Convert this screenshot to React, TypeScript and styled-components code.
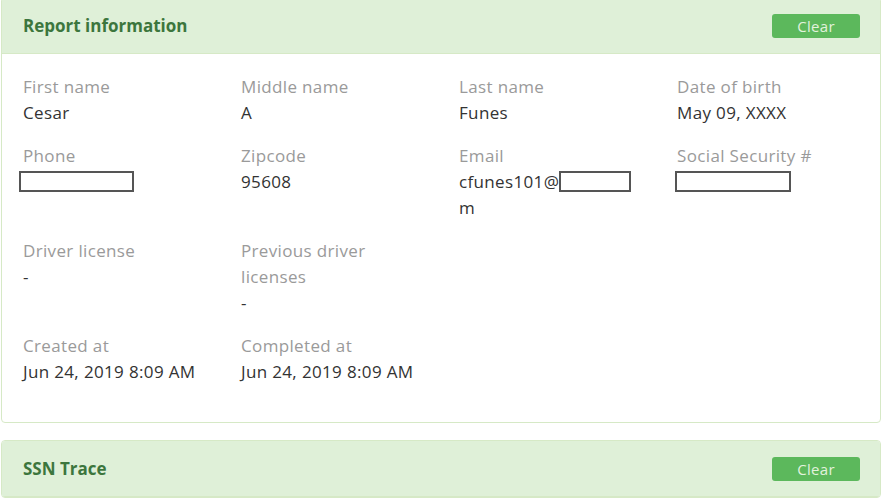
import styled, { createGlobalStyle } from 'styled-components';

const GlobalStyle = createGlobalStyle`
  body {
    margin: 0;
    background: #fff;
    font-family: "Open Sans", "Liberation Sans", sans-serif;
  }
`;

const fields = [
  [
    { label: 'First name', value: 'Cesar' },
    { label: 'Middle name', value: 'A' },
    { label: 'Last name', value: 'Funes' },
    { label: 'Date of birth', value: 'May 09, XXXX' },
  ],
];

const App = () => {
  return (
    <>
      <GlobalStyle />
      <SPage>
        <SPanel>
          <SHeading>
            <h3>Report information</h3>
            <SClear>Clear</SClear>
          </SHeading>
          <SBody>
            {fields[0].map((f) => (
              <SField key={f.label}>
                <SLabel>{f.label}</SLabel>
                <SValue>{f.value}</SValue>
              </SField>
            ))}
            <SField>
              <SLabel>Phone</SLabel>
              <SValue>
                <SRedact $w={115} $shift={-4} />
              </SValue>
            </SField>
            <SField>
              <SLabel>Zipcode</SLabel>
              <SValue>95608</SValue>
            </SField>
            <SField>
              <SLabel>Email</SLabel>
              <SValue>
                cfunes101@
                <SRedact $w={72} />
                <br />m
              </SValue>
            </SField>
            <SField>
              <SLabel>Social Security #</SLabel>
              <SValue>
                <SRedact $w={116} $shift={-2} />
              </SValue>
            </SField>
            <SField>
              <SLabel>Driver license</SLabel>
              <SValue>-</SValue>
            </SField>
            <SField>
              <SLabel>Previous driver licenses</SLabel>
              <SValue>-</SValue>
            </SField>
            <SField />
            <SField />
            <SField>
              <SLabel>Created at</SLabel>
              <SValue>Jun 24, 2019 8:09 AM</SValue>
            </SField>
            <SField>
              <SLabel>Completed at</SLabel>
              <SValue>Jun 24, 2019 8:09 AM</SValue>
            </SField>
          </SBody>
        </SPanel>
        <SPanel>
          <SHeading>
            <h3>SSN Trace</h3>
            <SClear>Clear</SClear>
          </SHeading>
        </SPanel>
      </SPage>
    </>
  );
};

const SPage = styled.div`
  margin-top: -3px;
  padding-left: 1px;
  width: 880px;
`;

const SPanel = styled.section`
  border: 1px solid #d6e9c6;
  border-radius: 4px;
  margin-bottom: 17px;
  background: #fff;
  overflow: hidden;
`;

const SHeading = styled.div`
  height: 56px;
  box-sizing: border-box;
  background: #dff0d8;
  border-bottom: 1px solid #d6e9c6;
  display: flex;
  align-items: center;
  justify-content: space-between;
  padding: 0 20px 0 21px;

  h3 {
    margin: 0;
    font-size: 17px;
    font-weight: 700;
    color: #3c763d;
  }
`;

const SClear = styled.button`
  width: 88px;
  height: 24px;
  border: 0;
  border-radius: 3px;
  background: #5cb85c;
  color: #e2f2dc;
  font-family: inherit;
  font-size: 15px;
  letter-spacing: 0.3px;
  padding: 0;
  margin-top: 1px;
`;

const SBody = styled.div`
  display: grid;
  grid-template-columns: repeat(4, 218px);
  padding: 20px 21px 20px;
`;

const SField = styled.div`
  margin-bottom: 17px;
  padding-right: 28px;
  font-size: 17px;
  letter-spacing: 0.35px;
  line-height: 26px;
`;

const SLabel = styled.div`
  color: #9a9a9a;
`;

const SValue = styled.div`
  color: #333;
`;

const SRedact = styled.span<{ $w: number; $shift?: number }>`
  display: inline-block;
  box-sizing: border-box;
  width: ${(p) => p.$w}px;
  height: 21px;
  margin-left: ${(p) => p.$shift ?? 0}px;
  border: 2px solid #555;
  background: #fff;
  vertical-align: -4px;
`;

export default App;
